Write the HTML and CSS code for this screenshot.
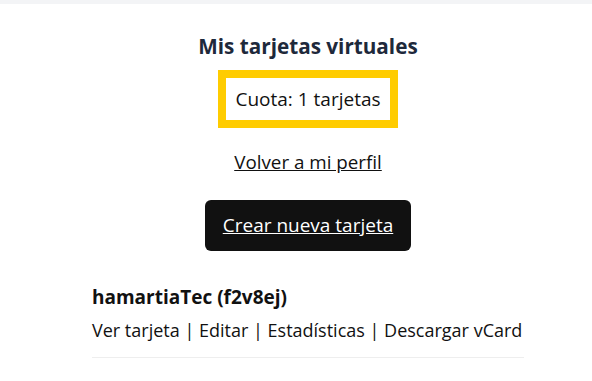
FILE: index.html
```html
<!DOCTYPE html>
<html>
<head>
  <title>Mis tarjetas virtuales</title>
  <meta charset="UTF-8">
  <link rel="stylesheet" href="styles.css">
</head>
<body>
  <div class="topbar"></div>

  <div class="page">
    <h1>Mis tarjetas virtuales</h1>

    <div class="quota">Cuota: 1 tarjetas</div>

    <a href="#" class="back-link">Volver a mi perfil</a>

    <a href="#" class="create-btn">Crear nueva tarjeta</a>

    <ul class="card-list">
      <li class="card-item">
        <div class="card-name">hamartiaTec (f2v8ej)</div>
        <div class="card-actions">
          <a href="#">Ver tarjeta</a> | <a href="#">Editar</a> | <a href="#">Estadísticas</a> | <a href="#">Descargar vCard</a>
        </div>
      </li>
    </ul>
  </div>
</body>
</html>
```

FILE: styles.css
```css
body {
  margin: 0;
  font-family: "Open Sans", "Noto Sans", sans-serif;
  color: #111;
  background: #fff;
}
.topbar {
  height: 4px;
  background-color: #f3f4f6;
}
.page {
  width: 432px;
  margin: 0 auto;
  padding-left: 24px;
  display: flex;
  flex-direction: column;
  align-items: center;
}
h1 {
  margin: 30px 0 0;
  font-size: 20.7px;
  font-weight: 700;
  color: #1e293b;
  line-height: 24px;
}
.quota {
  margin-top: 12px;
  border: 8px solid #ffcc00;
  padding: 8px 9px;
  font-size: 19px;
  line-height: 26px;
}
.back-link {
  margin-top: 22px;
  font-size: 18.8px;
  line-height: 24px;
  color: #111;
}
.create-btn {
  margin-top: 26px;
  padding: 12px 18px;
  background-color: #111;
  color: #fff;
  border-radius: 6px;
  font-size: 19px;
  line-height: 27px;
}
.card-list {
  list-style: none;
  margin: 32px 0 0;
  padding: 0;
  align-self: stretch;
}
.card-item {
  padding-bottom: 14px;
  border-bottom: 1px solid #eee;
}
.card-name {
  font-size: 19px;
  font-weight: 700;
  line-height: 28px;
}
.card-actions {
  margin-top: 6px;
  font-size: 18px;
  line-height: 26px;
}
.card-actions a {
  color: #111;
  text-decoration: none;
}
```
